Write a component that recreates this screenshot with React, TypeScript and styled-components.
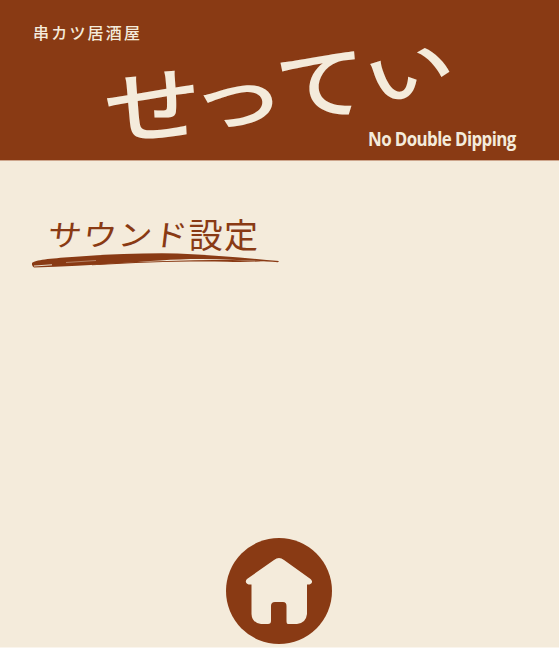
import React from "react";
import styled, { createGlobalStyle } from "styled-components";

const BROWN = "#893a14";
const CREAM = "#f4ebdb";

const GlobalStyle = createGlobalStyle`
  * { box-sizing: border-box; }
  body { margin: 0; background: ${CREAM}; }
`;

const Page = styled.div`
  display: flex;
  flex-direction: column;
  height: 648px;
  overflow: hidden;
  background: ${CREAM};
  border-bottom: 1px solid #faf5ed;
  color: ${BROWN};
  font-family: "Noto Sans CJK JP", sans-serif;
`;

const Header = styled.header`
  display: flex;
  flex-direction: column;
  height: 161px;
  flex: none;
  padding-top: 23px;
  background: ${BROWN};
  background-clip: padding-box;
  border-bottom: 1px solid #cda58c;
  color: ${CREAM};
`;

const ShopName = styled.div`
  height: 20px;
  padding-left: 33px;
  font-size: 16px;
  line-height: 19px;
  font-weight: 500;
  letter-spacing: 2.2px;
`;

const Title = styled.h1`
  display: flex;
  height: 86px;
  margin: 0;
  padding-left: 107px;
  font-size: 88px;
  line-height: 86px;
  font-weight: 500;
`;

const Glyph = styled.span<{ $w: number; $x: number; $y: number; $sx: number; $sy: number; $tilt?: number }>`
  flex: none;
  width: ${(p) => p.$w}px;
  display: flex;
  justify-content: center;
  transform: translate(${(p) => p.$x}px, ${(p) => p.$y}px) rotate(${(p) => p.$tilt ?? 0}deg)
    scale(${(p) => p.$sx}, ${(p) => p.$sy});
`;

const Tagline = styled.div`
  align-self: flex-end;
  width: 191px;
  height: 22px;
  font-family: "Open Sans", sans-serif;
  font-size: 20px;
  line-height: 20px;
  font-weight: 700;
  letter-spacing: -0.7px;
  white-space: nowrap;
  transform: scaleX(0.845);
  transform-origin: 0 50%;
`;

const Main = styled.main`
  flex: 1;
  padding: 55px 0 0 32px;
`;

const Heading = styled.h2`
  margin: 0;
  height: 38px;
  padding-left: 16px;
  font-size: 34px;
  line-height: 36px;
  font-weight: 400;
  letter-spacing: 1.2px;
  white-space: nowrap;
`;

const Kana = styled.span`
  display: inline-block;
  transform: scaleY(0.88) skewX(-6deg);
`;

const Brush = styled.svg`
  display: block;
  width: 247px;
  height: 16px;
  margin-top: -1px;
`;

const Footer = styled.footer`
  display: flex;
  justify-content: center;
  height: 109px;
  padding-right: 2px;
`;

const HomeButton = styled.button`
  width: 106px;
  height: 106px;
  padding: 0;
  border: 0;
  border-radius: 50%;
  background: ${BROWN};
`;

const HomeIcon = styled.svg`
  display: block;
  width: 106px;
  height: 106px;
  fill: ${CREAM};
`;

const glyphs = [
  { char: "せ", w: 89, x: 1, y: 15, sx: 1.12, sy: 0.93, tilt: -5 },
  { char: "っ", w: 84, x: -1, y: 6, sx: 1.1, sy: 0.85, tilt: -3 },
  { char: "て", w: 78, x: 2, y: -7, sx: 1.05, sy: 0.92, tilt: -5 },
  { char: "い", w: 96, x: 2, y: -17, sx: 1.02, sy: 0.68, tilt: -18 },
];

export default function App() {
  return (
    <Page>
      <GlobalStyle />
      <Header>
        <ShopName>串カツ居酒屋</ShopName>
        <Title>
          {glyphs.map((g) => (
            <Glyph key={g.char} $w={g.w} $x={g.x} $y={g.y} $sx={g.sx} $sy={g.sy} $tilt={g.tilt}>
              {g.char}
            </Glyph>
          ))}
        </Title>
        <Tagline>No Double Dipping</Tagline>
      </Header>
      <Main>
        <Heading>
          <Kana>サウンド</Kana>設定
        </Heading>
        <Brush viewBox="0 0 247 16" aria-hidden="true">
          <path
            fill={BROWN}
            d="M0 10 C3 7 18 5.500 40 4 C70 1.500 100 0.300 130 0.300 C175 1 212 5 247 8 L246 9.200 C225 7.500 200 6.500 170 6 C140 6 115 8.500 90 10 C60 12.500 30 13.500 2 14.500 Q-0.500 13 0 10 Z"
          />
          <path fill="none" stroke={CREAM} strokeWidth="0.9" d="M2 13 L20 11.800" />
          <path fill="none" stroke={CREAM} strokeWidth="0.4" d="M34 9.500 L64 7.500" />
          <path fill={BROWN} d="M60 11.500 C100 8.500 150 7 200 7 L232 8 Q215 9.500 195 8.800 C150 8 110 9.500 60 12.300 Z" />
        </Brush>
      </Main>
      <Footer>
        <HomeButton aria-label="Home">
          <HomeIcon viewBox="0 0 106 106">
            <path d="M48 22 Q53 18 58 22 L84.500 41 C88 44 85 47 81 46.500 V76 Q80 85 71 86 H62 Q60.500 86 60.500 83 V68 Q60.500 64 57 64 H49 Q45 64 45 68 V83 Q45 86 42 86 H35 Q26 85 25.500 76 V46.500 C21 47 18 44 21 41 Z" />
          </HomeIcon>
        </HomeButton>
      </Footer>
    </Page>
  );
}
